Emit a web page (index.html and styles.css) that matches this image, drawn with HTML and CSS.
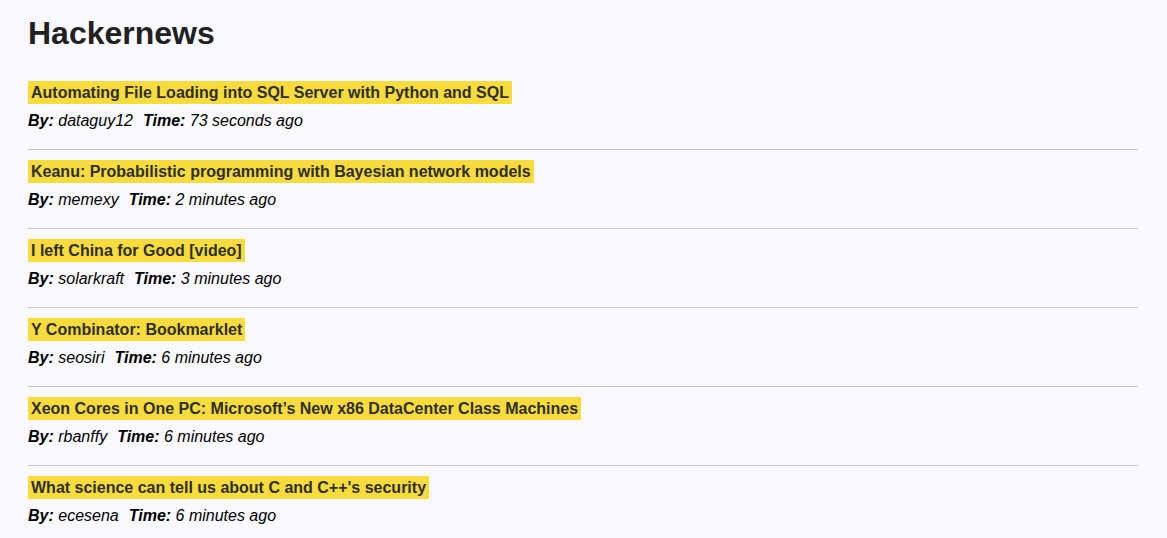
FILE: index.html
```html
<!DOCTYPE html>
<html lang="en">
<head>
<meta charset="utf-8">
<title>Hackernews</title>
<link rel="stylesheet" href="styles.css">
</head>
<body>
<main class="page">
<h1 class="title">Hackernews</h1>
<article class="story">
<a class="story-link" href="#">Automating File Loading into SQL Server with Python and SQL</a>
<p class="meta"><span><b>By:</b> dataguy12</span><span><b>Time:</b> 73 seconds ago</span></p>
</article>
<article class="story">
<a class="story-link" href="#">Keanu: Probabilistic programming with Bayesian network models</a>
<p class="meta"><span><b>By:</b> memexy</span><span><b>Time:</b> 2 minutes ago</span></p>
</article>
<article class="story">
<a class="story-link" href="#">I left China for Good [video]</a>
<p class="meta"><span><b>By:</b> solarkraft</span><span><b>Time:</b> 3 minutes ago</span></p>
</article>
<article class="story">
<a class="story-link" href="#">Y Combinator: Bookmarklet</a>
<p class="meta"><span><b>By:</b> seosiri</span><span><b>Time:</b> 6 minutes ago</span></p>
</article>
<article class="story">
<a class="story-link" href="#">Xeon Cores in One PC: Microsoft’s New x86 DataCenter Class Machines</a>
<p class="meta"><span><b>By:</b> rbanffy</span><span><b>Time:</b> 6 minutes ago</span></p>
</article>
<article class="story">
<a class="story-link" href="#">What science can tell us about C and C++'s security</a>
<p class="meta"><span><b>By:</b> ecesena</span><span><b>Time:</b> 6 minutes ago</span></p>
</article>
</main>
</body>
</html>
```
FILE: styles.css
```css
body {
  margin: 0;
  background: #faf9ff;
  color: #000;
  font: 16px/20px "Liberation Sans", Arial, sans-serif;
}

.page {
  padding: 15px 29px 0 28px;
}

.title {
  margin: 0 0 19px;
  color: #212121;
  font-size: 32px;
  line-height: 37px;
}

.story {
  display: flex;
  flex-direction: column;
  align-items: flex-start;
  gap: 7px;
  padding: 10px 0 18px;
  border-bottom: 1px solid #c8c7cc;
}

.story:last-child {
  border-bottom: 0;
}

.story-link {
  padding: 2px 3px 1px;
  background: #f8dc3d;
  color: #2e2e2c;
  font-weight: bold;
  text-decoration: none;
}

.meta {
  display: flex;
  gap: 10px;
  margin: 0;
  font-style: italic;
}
```
